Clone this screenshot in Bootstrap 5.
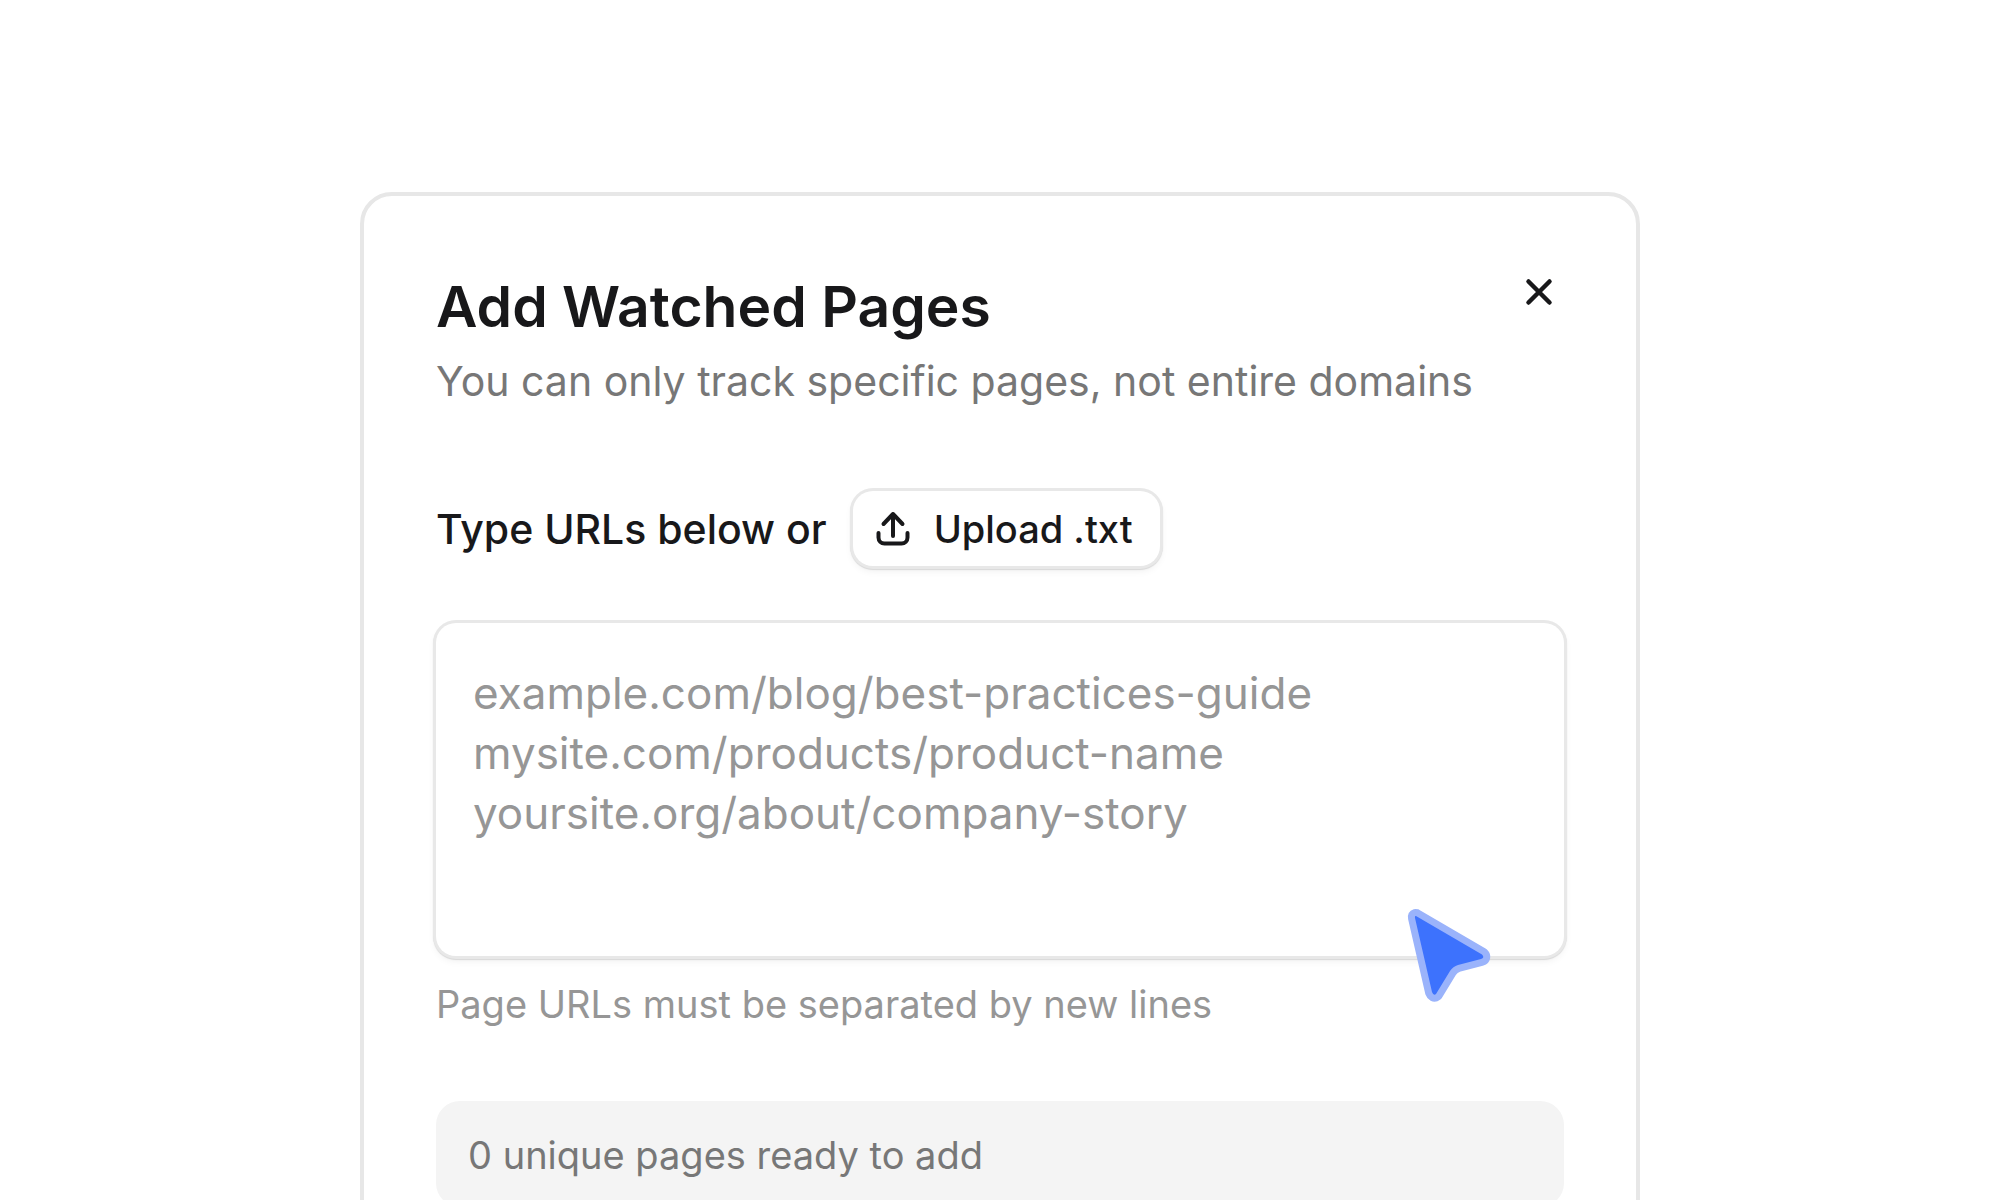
<!DOCTYPE html>
<html lang="en">
<head>
<meta charset="utf-8">
<meta name="viewport" content="width=device-width, initial-scale=1">
<title>Add Watched Pages</title>
<link href="https://cdn.jsdelivr.net/npm/bootstrap@5.3.0/dist/css/bootstrap.min.css" rel="stylesheet">
<style>
  body { font-family: Inter, "Liberation Sans", sans-serif; color: #18181a; background: #fff; }
  .stage { padding: 192px 24px 0; }
  .watch-dialog { max-width: 1280px; border: 4px solid #e7e7e7; border-radius: 32px; padding: 79px 72px; }
  .dialog-title { font-size: 57px; line-height: 64px; font-weight: 600; margin-bottom: 14px; }
  .dialog-sub { font-size: 41px; line-height: 56px; color: #777; }
  .close-x { width: 50px; height: 50px; margin-top: -8px; color: inherit; }
  .source-row { margin-top: 82px; gap: 26px; }
  .source-label { font-size: 41px; line-height: 56px; font-weight: 500; }
  .ring, .ring:focus { box-shadow: 0 0 0 3px #e8e8e8, 0 1px 1px 3px rgba(0, 0, 0, .12), 0 4px 8px rgba(0, 0, 0, .08); border: 0; background: #fff; }
  .btn-upload { font-size: 38px; line-height: 56px; font-weight: 500; padding: 10px 27px 9px 20px; border-radius: 20px; gap: 21px; color: inherit; }
  .url-wrap { margin-top: 57px; }
  .url-box { height: 333px; padding: 40px 37px; font-size: 44px; line-height: 60px; border-radius: 20px; resize: none; }
  .url-box::placeholder { color: #969696; opacity: 1; }
  .help-line { font-size: 38px; line-height: 56px; color: #969696; margin-top: 20px; }
  .count-bar { margin-top: 69px; padding: 26px 32px 24px; font-size: 38px; line-height: 56px; border-radius: 24px; background: #f4f4f4; color: #777; }
  .pointer { right: 54px; bottom: -54px; pointer-events: none; }
</style>
</head>
<body>
<main class="stage vh-100 overflow-hidden">
  <section class="watch-dialog mx-auto" role="dialog" aria-labelledby="dlgTitle">
    <header class="d-flex justify-content-between align-items-start">
      <div>
        <h1 class="dialog-title" id="dlgTitle">Add Watched Pages</h1>
        <p class="dialog-sub mb-0">You can only track specific pages, not entire domains</p>
      </div>
      <button type="button" class="close-x btn p-0 border-0 d-flex align-items-center justify-content-center" aria-label="Close">
        <svg width="28" height="28" viewBox="0 0 28 28" fill="none" stroke="currentColor" stroke-width="4.500" stroke-linecap="round"><path d="M3.500 3.500 24.500 24.500M24.500 3.500 3.500 24.500"/></svg>
      </button>
    </header>
    <div class="source-row d-flex align-items-center">
      <label class="source-label" for="urls">Type URLs below or</label>
      <button type="button" class="btn btn-upload ring d-flex align-items-center">
        <svg width="40" height="40" viewBox="0 0 40 40" fill="none" stroke="currentColor" stroke-width="4" stroke-linecap="round" stroke-linejoin="round"><path d="M20 27V5M10.500 15 20 5 29.500 15M5.500 24v4.500a6 6 0 0 0 6 6h17a6 6 0 0 0 6-6v-4.500"/></svg>
        <span>Upload .txt</span>
      </button>
    </div>
    <div class="url-wrap position-relative">
      <textarea id="urls" class="form-control url-box ring" aria-describedby="urlHelp" placeholder="example.com/blog/best-practices-guide
mysite.com/products/product-name
yoursite.org/about/company-story"></textarea>
      <svg class="pointer position-absolute" width="120" height="120" viewBox="0 0 120 120" aria-hidden="true">
        <path d="M26 26 L92 64.500 Q95 67.500 91 69 L68 75 Q63 76.500 60 81 L46 104 Q43.500 106 42 102 L25 28 Q24.500 25.500 26 26Z" fill="#9ab3fb" stroke="#9ab3fb" stroke-width="14" stroke-linejoin="round"/>
        <path d="M26 26 L92 64.500 Q95 67.500 91 69 L68 75 Q63 76.500 60 81 L46 104 Q43.500 106 42 102 L25 28 Q24.500 25.500 26 26Z" fill="#3d72fd"/>
      </svg>
    </div>
    <p class="help-line mb-0" id="urlHelp">Page URLs must be separated by new lines</p>
    <div class="count-bar" role="status">0 unique pages ready to add</div>
  </section>
</main>
<script src="https://cdn.jsdelivr.net/npm/bootstrap@5.3.0/dist/js/bootstrap.bundle.min.js"></script>
</body>
</html>
